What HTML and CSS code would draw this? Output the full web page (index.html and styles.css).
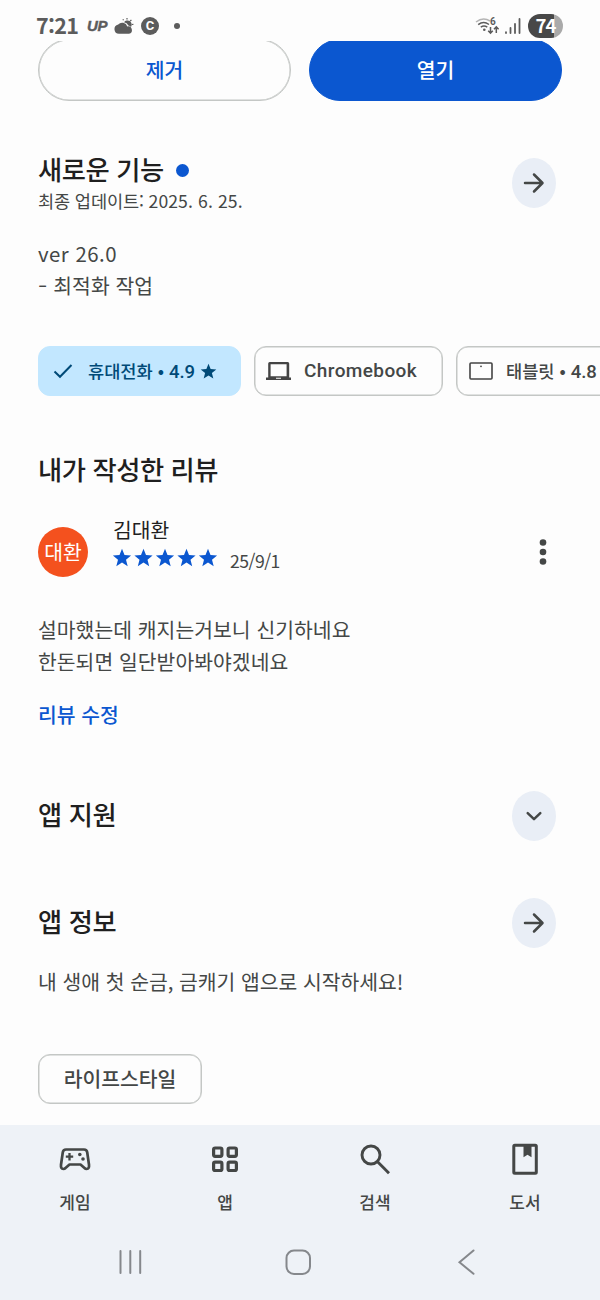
FILE: index.html
```
<!DOCTYPE html>
<html lang="ko">
<head>
<meta charset="utf-8">
<title>앱 상세정보</title>
<link rel="stylesheet" href="styles.css">
</head>
<body>
<div class="screen">
  <header class="status">
    <span class="clock">7:21</span>
    <span class="up">UP</span>
    <svg class="weather" width="20" height="18" viewBox="0 0 20 18"><path d="M5 16.800a4.700 4.700 0 0 1-.8-9.300A5.300 5.300 0 0 1 13.300 9.500a3.700 3.700 0 0 1 1.700 7.300z" fill="#5c5c5c"/><path d="M10 5.300a4 4 0 0 1 7 4.600 5 5 0 0 0-2.600-1.300A6 6 0 0 0 10 5.300z" fill="#5c5c5c"/><path d="M9.500 3.300l-.6-1M13 2.500V1M16.200 4.200l1.200-1.400M17.800 7.500l1.600-.2" stroke="#5c5c5c" stroke-width="1.200"/></svg>
    <span class="coin">C</span>
    <span class="dot"></span>
    <svg class="wifi" width="25" height="20" viewBox="0 0 25 20" fill="none" stroke="#5c5c5c" stroke-width="1.500"><path d="M1 6Q8 .5 15 5" stroke="#b5b5b5"/><path d="M3.200 8.700Q8.500 4.600 14 8.500M5.800 11.200Q9 9 12.300 11.200"/><circle cx="9.300" cy="13.700" r="1.300" fill="#5c5c5c" stroke="none"/><path d="M15.500 11v6m-2.300-2.200 2.300 2.300 2.300-2.300M21.300 17v-6m-2.300 2.200 2.300-2.300 2.300 2.300"/><text x="15" y="8.500" class="six">6</text></svg>
    <svg class="signal" width="16" height="16" viewBox="0 0 16 16" stroke="#5c5c5c" stroke-width="1.800" stroke-linecap="round"><path d="M1 14.200v.8M5.500 10v5M10 6v9M14.500 1v14"/></svg>
    <span class="battery">74</span>
  </header>

  <main>
    <div class="actions">
      <button class="btn">제거</button>
      <button class="btn filled">열기</button>
    </div>

    <section class="row news">
      <div>
        <h2>새로운 기능<i class="new"></i></h2>
        <p class="updated">최종 업데이트: <span class="date">2025. 6. 25.</span></p>
      </div>
      <span class="round"><svg width="22" height="22" viewBox="0 0 22 22"><path d="M2 11h17M11 2.500l8.500 8.500L11 19.500"/></svg></span>
    </section>
    <p class="body changes"><span class="ver">ver 26.0</span><br><span class="dash">-</span> 최적화 작업</p>

    <div class="chips">
      <div class="chip on">
        <svg width="20" height="16" viewBox="0 0 20 16" fill="none" stroke="#004a77" stroke-width="2"><path d="M1.500 8.500l5.500 5.300L18.500 2"/></svg>
        <span class="chip-text">휴대전화 • <b>4.9</b></span>
        <svg class="chip-star" width="17" height="17" viewBox="0 0 24 24" fill="#004a77"><path d="M12 1l3 7.400 8 .6-6.200 5 2 8L12 17.700 5.200 22l2-8L1 9l8-.6z"/></svg>
      </div>
      <div class="chip laptop">
        <svg width="25" height="19" viewBox="0 0 25 19"><path fill="#444" fill-rule="evenodd" d="M2.200 1.500Q2.200 0 3.700 0h18q1.500 0 1.500 1.500v14H25V18H0v-2.500h2.200zM4.600 2.300v12h16v-12zM10 15.800v1h5v-1z"/></svg>
        <span class="chip-text latin">Chromebook</span>
      </div>
      <div class="chip tablet">
        <svg width="24" height="18" viewBox="0 0 24 18" fill="none" stroke="#444" stroke-width="1.600"><rect x="1" y="1" width="22" height="16" rx="1"/><circle cx="12" cy="4.300" r=".9" fill="#444" stroke="none"/></svg>
        <span class="chip-text">태블릿 • <b>4.8</b></span>
      </div>
    </div>

    <h2 class="mine">내가 작성한 리뷰</h2>
    <div class="reviewer">
      <span class="avatar">대환</span>
      <div class="who">
        <div class="name">김대환</div>
        <div class="rating">
          <svg width="106" height="20" viewBox="0 0 106 20" fill="#0b57d0"><defs><path id="star" d="M10 .8l2.500 6.100 6.600.5-5.100 4.300 1.700 6.500-5.700-3.600-5.700 3.600 1.700-6.500L.9 7.400l6.600-.5z"/></defs><use href="#star"/><use href="#star" x="21.500"/><use href="#star" x="43"/><use href="#star" x="64.500"/><use href="#star" x="86"/></svg>
          <span>25/9/1</span>
        </div>
      </div>
      <svg class="more" width="8" height="28" viewBox="0 0 8 28" fill="#444746"><circle cx="4" cy="4.500" r="3.300"/><circle cx="4" cy="14" r="3.300"/><circle cx="4" cy="23.500" r="3.300"/></svg>
    </div>
    <p class="body review">설마했는데 캐지는거보니 신기하네요<br>한돈되면 일단받아봐야겠네요</p>
    <a class="edit">리뷰 수정</a>

    <section class="row support">
      <h2>앱 지원</h2>
      <span class="round"><svg width="22" height="22" viewBox="0 0 22 22"><path d="M4.700 8.200l6.300 6 6.300-6"/></svg></span>
    </section>
    <section class="row info">
      <h2>앱 정보</h2>
      <span class="round"><svg width="22" height="22" viewBox="0 0 22 22"><path d="M2 11h17M11 2.500l8.500 8.500L11 19.500"/></svg></span>
    </section>
    <p class="body about">내 생애 첫 순금, 금캐기 앱으로 시작하세요!</p>
    <span class="tag">라이프스타일</span>
  </main>

  <footer>
    <nav class="tabs">
      <div class="tab"><svg width="34" height="34" viewBox="0 0 34 34" fill="none" stroke="#444746" stroke-width="2.700" stroke-linejoin="round"><path d="M8 6.500h18q2.800 0 3.200 2.800l1.800 12.500q.4 4.200-2.300 4.200-1.300 0-2.200-1L22.500 21.500H11.500L7.500 25q-.9 1-2.200 1Q2.600 26 3 21.800l1.800-12.500Q5.200 6.500 8 6.500z"/><path d="M11.500 10v7.400M7.800 13.700h7.400" stroke-width="2.300"/><g fill="#444746" stroke="none"><circle cx="21.800" cy="11.500" r="1.800"/><circle cx="25" cy="16" r="1.800"/></g></svg><span>게임</span></div>
      <div class="tab"><svg width="34" height="34" viewBox="0 0 34 34" fill="none" stroke="#444746" stroke-width="3.200"><rect x="5.600" y="5" width="8.300" height="8.300" rx="1.500"/><rect x="20.100" y="5" width="8.300" height="8.300" rx="1.500"/><rect x="5.600" y="19.200" width="8.300" height="8.300" rx="1.500"/><rect x="20.100" y="19.200" width="8.300" height="8.300" rx="1.500"/></svg><span>앱</span></div>
      <div class="tab"><svg width="34" height="34" viewBox="0 0 34 34" fill="none" stroke="#444746" stroke-width="2.900"><circle cx="13" cy="12" r="9"/><path d="M19.300 18.500l11.700 11.700"/></svg><span>검색</span></div>
      <div class="tab"><svg width="34" height="34" viewBox="0 0 34 34" fill="none" stroke="#444746" stroke-width="3"><rect x="5.800" y="2.300" width="22.500" height="28" rx="1"/><path d="M15.500 2h8v12.300l-4-2.500-4 2.500z" fill="#444746" stroke="none"/></svg><span>도서</span></div>
    </nav>
    <div class="system">
      <svg width="26" height="28" viewBox="0 0 26 28"><path d="M3.500 3v22M13.300 3v22M23.200 3v22"/></svg>
      <svg width="26" height="28" viewBox="0 0 26 28"><rect x="1.500" y="2.500" width="23.500" height="23.500" rx="7.500"/></svg>
      <svg width="26" height="28" viewBox="0 0 26 28"><path d="M20.500 2.500L6.500 14.200l14 11.600"/></svg>
    </div>
  </footer>
</div>
</body>
</html>
```
FILE: styles.css
```
* { box-sizing: border-box; }
body { margin: 0; background: #fdfdfd; color: #444746; font-family: "Noto Sans CJK KR", sans-serif; }
h2, p { margin: 0; }
h2 { font-size: 26.3px; line-height: 36px; font-weight: 500; letter-spacing: -.45px; color: #1f1f1f; white-space: nowrap; }
.screen { width: 600px; height: 1300px; overflow: hidden; display: flex; flex-direction: column; }

.status { height: 41px; flex: none; display: flex; align-items: center; padding: 11px 37px 0 36px; position: relative; z-index: 1; background: #fdfdfd; color: #5c5c5c; }
.clock { font: 700 21.5px/28px "Noto Sans CJK KR", sans-serif; width: 43px; letter-spacing: -.7px; padding-bottom: 2px; }
.up { font: italic 700 15px/30px "Liberation Sans", sans-serif; margin-left: 8px; width: 22px; letter-spacing: -.3px; -webkit-text-stroke: .4px #5c5c5c; }
.weather { margin-left: 5px; }
.coin { width: 18px; height: 18px; margin-left: 7px; border-radius: 50%; background: #5c5c5c; color: #fff; font: 700 13px/18px Roboto, sans-serif; text-align: center; }
.dot { width: 6px; height: 6px; border-radius: 50%; background: #5c5c5c; margin-left: 15px; }
.wifi { margin-left: auto; }
.six { font: 700 10px Roboto, sans-serif; fill: #5c5c5c; stroke: none; }
.signal { margin: 0 7px 0 5px; }
.battery { width: 35px; height: 24px; border-radius: 12px; background: linear-gradient(90deg, #484848 74%, #aaa 74%); color: #fff; font: 700 18.5px/23px "Noto Sans CJK KR", sans-serif; letter-spacing: -1px; text-align: center; }

main { height: 1084px; flex: none; padding-left: 38px; display: flex; flex-direction: column; align-items: flex-start; }
.actions { display: flex; gap: 18px; margin-top: -2px; }
.btn { width: 253px; height: 62px; border: 1.600px solid #c4c7c5; box-shadow: inset 0 0 0 .5px #c4c7c5; border-radius: 31px; background: transparent; color: #0b57d0; font: 500 20.4px/30px "Noto Sans CJK KR", sans-serif; padding: 0 0 2px; }
.filled { background: #0b57d0; border-color: #0b57d0; box-shadow: none; color: #fff; }
.row { width: 518px; display: flex; justify-content: space-between; align-items: center; }
.round { width: 44px; height: 50px; flex: none; border-radius: 22px / 25px; background: #e9eef6; display: flex; align-items: center; justify-content: center; }
.round path { fill: none; stroke: #444746; stroke-width: 2.500; stroke-linecap: round; stroke-linejoin: round; }
.news { margin-top: 50px; height: 64px; }
.news h2 { line-height: 34px; margin-bottom: 2px; }
.new { display: inline-block; width: 13px; height: 13px; margin-left: 12px; border-radius: 50%; background: #0b57d0; vertical-align: 3px; }
.updated { font-size: 17.600px; line-height: 26px; letter-spacing: -.15px; white-space: nowrap; }
.date { font: 17.600px "Noto Sans CJK KR", sans-serif; letter-spacing: .1px; }
.body { font-size: 20.4px; line-height: 31.500px; letter-spacing: .05px; white-space: nowrap; }
.changes { margin-top: 23px; }
.ver { letter-spacing: .5px; }
.dash { display: inline-block; width: 9.500px; transform: scaleX(1.3); transform-origin: left; }

.chips { display: flex; gap: 13px; margin-top: 45px; width: 562px; overflow: hidden; }
.chip { flex: none; display: flex; align-items: center; height: 50px; border: 1.600px solid #c4c7c5; box-shadow: inset 0 0 0 .5px #c4c7c5; border-radius: 12px; font-size: 17.600px; font-weight: 500; white-space: nowrap; }
.chip-text { line-height: 26px; }
.chip b { font: 500 18.500px Roboto, sans-serif; }
.on { width: 203px; background: #c2e7ff; border-color: #c2e7ff; box-shadow: none; color: #004a77; padding-left: 14px; }
.on .chip-text { margin-left: 15px; }
.chip-star { margin-left: 5px; }
.laptop { width: 189px; padding-left: 11px; }
.latin { font: 500 19px/26px Roboto, sans-serif; letter-spacing: .4px; margin-left: 13px; }
.tablet { width: 190px; padding-left: 12px; }
.tablet .chip-text { margin-left: 13px; }

.mine { margin-top: 55px; }
.reviewer { width: 518px; height: 56px; margin-top: 29px; display: flex; }
.avatar { width: 50px; height: 50px; margin-top: 11px; border-radius: 50%; background: #f4511e; color: #fff; font-size: 20.4px; line-height: 48px; text-align: center; }
.who { margin-left: 25px; }
.name { color: #1f1f1f; font-size: 20.4px; line-height: 26px; }
.rating { display: flex; align-items: center; height: 32px; margin-left: -1px; font: 17.600px/26px "Noto Sans CJK KR", sans-serif; }
.rating span { margin: 6px 0 0 12px; letter-spacing: -.5px; }
.more { margin: 22px 9px 0 auto; }
.review { margin-top: 42px; }
.edit { margin-top: 22px; color: #0b57d0; font-size: 20.4px; line-height: 30px; font-weight: 500; }
.support { margin-top: 62px; height: 50px; }
.info { margin-top: 57px; height: 50px; }
.support h2, .info h2 { padding-bottom: 4px; }
.about { margin-top: 18px; letter-spacing: 0; }
.tag { margin-top: 56px; width: 164px; height: 50px; border: 1.600px solid #c4c7c5; box-shadow: inset 0 0 0 .5px #c4c7c5; border-radius: 12px; font-size: 20.4px; line-height: 47px; font-weight: 500; text-align: center; }

footer { height: 175px; flex: none; background: #eef2f7; }
.tabs { display: grid; grid-template-columns: repeat(4, 150px); padding-top: 18px; height: 105px; }
.tab { display: flex; flex-direction: column; align-items: center; gap: 13px; font-size: 17px; line-height: 24px; font-weight: 500; }
.system { display: flex; padding: 18px 0 0 117px; gap: 142px; }
.system svg { fill: none; stroke: #85888c; stroke-width: 2; stroke-linecap: round; }
```
